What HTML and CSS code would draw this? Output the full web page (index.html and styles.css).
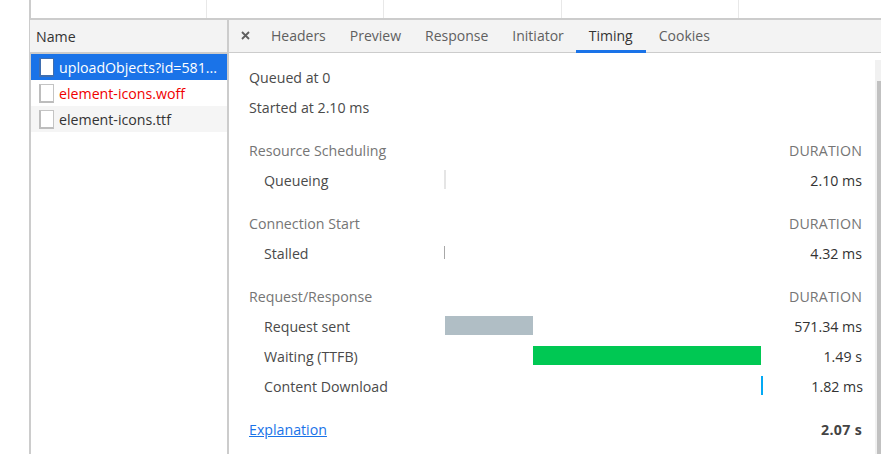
FILE: index.html
```html
<!DOCTYPE html>
<html lang="en">
<head>
<meta charset="utf-8">
<title>Network timing</title>
<link rel="stylesheet" href="styles.css">
</head>
<body>
<div class="page">
  <div class="top-strip">
    <div class="top-cell"></div><div class="top-cell"></div><div class="top-cell"></div><div class="top-cell"></div><div class="top-cell"></div>
  </div>
  <div class="panes">
    <aside class="names">
      <div class="names-head">Name</div>
      <ul class="file-list">
        <li class="file selected"><span class="file-icon"></span><span class="file-name">uploadObjects?id=581...</span></li>
        <li class="file failed"><span class="file-icon"></span><span class="file-name">element-icons.woff</span></li>
        <li class="file striped"><span class="file-icon"></span><span class="file-name">element-icons.ttf</span></li>
      </ul>
    </aside>
    <section class="detail">
      <nav class="tabs">
        <svg class="close" width="9" height="9" viewBox="0 0 9 9"><path d="M1 1l7 7M8 1l-7 7" stroke="#5f5f5f" stroke-width="1.8" fill="none"/></svg>
        <span class="tab">Headers</span>
        <span class="tab">Preview</span>
        <span class="tab">Response</span>
        <span class="tab">Initiator</span>
        <span class="tab active">Timing</span>
        <span class="tab">Cookies</span>
      </nav>
      <div class="timing-wrap">
        <div class="timing">
          <div class="row plain">Queued at 0</div>
          <div class="row plain">Started at 2.10 ms</div>
          <div class="spacer"></div>
          <div class="row head"><span>Resource Scheduling</span><span class="val">DURATION</span></div>
          <div class="row item"><span class="label">Queueing</span><span class="track"><i class="bar b-queue"></i></span><span class="val">2.10 ms</span></div>
          <div class="spacer"></div>
          <div class="row head"><span>Connection Start</span><span class="val">DURATION</span></div>
          <div class="row item"><span class="label">Stalled</span><span class="track"><i class="bar b-stall"></i></span><span class="val">4.32 ms</span></div>
          <div class="spacer"></div>
          <div class="row head"><span>Request/Response</span><span class="val">DURATION</span></div>
          <div class="row item"><span class="label">Request sent</span><span class="track"><i class="bar b-sent"></i></span><span class="val">571.34 ms</span></div>
          <div class="row item"><span class="label">Waiting (TTFB)</span><span class="track"><i class="bar b-wait"></i></span><span class="val">1.49 s</span></div>
          <div class="row item"><span class="label">Content Download</span><span class="track"><i class="bar b-down"></i></span><span class="val">1.82 ms</span></div>
          <div class="spacer"></div>
          <div class="row total"><a class="link" href="#">Explanation</a><strong class="val">2.07 s</strong></div>
        </div>
        <div class="scrollbar"><div class="thumb"></div></div>
      </div>
    </section>
  </div>
</div>
</body>
</html>
```
FILE: styles.css
```css
* { box-sizing: border-box; }
html, body { margin: 0; height: 100%; background: #fff; overflow: hidden; }
body { font-family: "Open Sans", "Noto Sans", sans-serif; font-size: 14.2px; color: #333; }
.page { width: 881px; height: 454px; display: flex; flex-direction: column; padding-left: 29px; }
.top-strip { height: 20px; display: grid; grid-template-columns: 176px 177px 178px 177px 1fr; border-left: 2px solid #ccc; border-bottom: 2px solid #ccc; flex: none; }
.top-cell { border-right: 1px solid #e8e8e8; }
.top-cell:last-child { border-right: 0; }
.panes { flex: 1; display: flex; min-height: 0; }
.names { width: 200px; flex: none; border-left: 2px solid #ccc; border-right: 2px solid #ccc; }
.names-head { height: 34px; margin-left: -1px; padding-left: 6px; background: #f3f3f3; border-bottom: 2px solid #ccc; line-height: 33px; color: #333; }
.file-list { list-style: none; margin: 0; padding: 0; }
.file { height: 26px; display: flex; align-items: center; padding-left: 8px; gap: 5px; color: #333; white-space: nowrap; }
.file-icon { width: 15px; height: 19px; background: #fff; border: 1px solid #c4c4c4; border-left: 2px solid #bdbdbd; border-bottom: 2px solid #bdbdbd; flex: none; }
.selected { background: #1a73e8; color: #fff; }
.selected .file-icon { border-color: #3f6eb0; }
.failed { color: #f00000; }
.striped { background: #f5f5f5; }
.detail { flex: 1; display: flex; flex-direction: column; min-width: 0; }
.tabs { height: 33px; flex: none; display: flex; align-items: flex-start; background: #f3f3f3; border-bottom: 1px solid #ccc; padding-left: 12px; font-size: 14px; }
.close { align-self: center; margin-right: 9px; margin-bottom: 1px; flex: none; }
.tab { padding: 0 12px; line-height: 32px; color: #5f5f5f; height: 33px; }
.tab.active { color: #333; border-bottom: 3px solid #1a73e8; padding: 0 13px; }
.tab.active + .tab { padding-left: 13px; }
.timing-wrap { flex: 1; display: flex; min-height: 0; }
.timing { flex: 1; padding: 10px 13px 0 20px; min-width: 0; }
.row { height: 30px; line-height: 30px; display: flex; align-items: center; white-space: nowrap; }
.plain { color: #4a4a4a; }
.spacer { height: 13px; }
.head { justify-content: space-between; color: #757575; }
.head .val { letter-spacing: 0.15px; }
.item { color: #4a4a4a; }
.label { width: 196px; padding-left: 15px; flex: none; }
.track { flex: 1; height: 100%; display: flex; align-items: flex-start; padding-top: 4px; }
.val { margin-left: auto; }
.item .val { color: #333; margin-left: 0; width: 100px; text-align: right; flex: none; }
.bar { display: block; height: 19px; flex: none; }
.b-queue { width: 2px; margin-left: -1px; background: #e5e5e5; }
.b-stall { width: 1px; height: 13px; margin-top: 3px; margin-left: -1px; background: #a8a8a8; }
.b-sent { width: 88px; background: #b0bec5; }
.b-wait { width: 228px; margin-left: 88px; background: #00c853; }
.b-down { width: 2px; margin-left: 316px; background: #03a9f4; }
.total { justify-content: space-between; }
.link { color: #1a73e8; text-decoration: underline; }
.total strong { font-weight: 700; color: #444; letter-spacing: 0.3px; }
.scrollbar { width: 6px; flex: none; margin-top: 7px; background: #f1f1f1; padding-top: 21px; display: flex; justify-content: flex-end; }
.thumb { width: 4px; height: 100%; background: #c1c1c1; }
```
